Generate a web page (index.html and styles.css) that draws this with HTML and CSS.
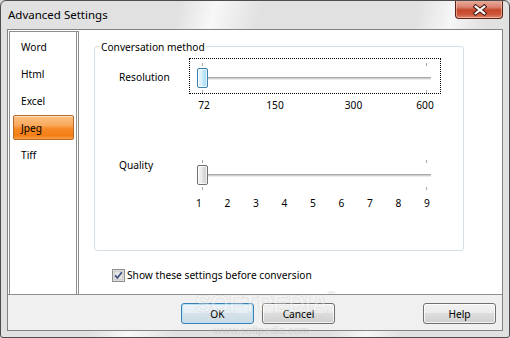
FILE: index.html
```html
<!DOCTYPE html>
<html>
<head>
<meta charset="utf-8">
<link rel="stylesheet" href="styles.css">
</head>
<body>
<div class="window">
  <div class="titlebar">
    <span class="title">Advanced Settings</span>
    <div class="close">
      <svg width="48" height="19" viewBox="0 0 48 19">
        <path d="M20.5 6.5 L29.5 13.5 M29.5 6.5 L20.5 13.5" stroke="#4a1e16" stroke-width="4.4" stroke-linecap="square" fill="none"/>
        <path d="M20.5 6.5 L29.5 13.5 M29.5 6.5 L20.5 13.5" stroke="#ffffff" stroke-width="2.2" stroke-linecap="square" fill="none"/>
      </svg>
    </div>
  </div>
  <div class="client">
    <div class="main">
      <ul class="list">
        <li class="item">Word</li>
        <li class="item">Html</li>
        <li class="item">Excel</li>
        <li class="item selected">Jpeg</li>
        <li class="item">Tiff</li>
      </ul>
      <div class="panel">
        <div class="group">
          <div class="legend">Conversation method</div>
          <div class="row row-res">
            <div class="label label-res">Resolution</div>
            <div class="slider focused">
              <span class="tick tick-top tick-l"></span>
              <span class="tick tick-top tick-r"></span>
              <span class="track"></span>
              <span class="thumb thumb-blue"></span>
              <span class="tick tick-bot tick-l"></span>
              <span class="tick tick-bot tick-r"></span>
            </div>
            <div class="scale scale-res"><span>72</span><span>150</span><span>300</span><span>600</span></div>
          </div>
          <div class="row row-qual">
            <div class="label label-qual">Quality</div>
            <div class="slider">
              <span class="tick tick-top tick-l"></span>
              <span class="tick tick-top tick-r"></span>
              <span class="track"></span>
              <span class="thumb thumb-gray"></span>
              <span class="tick tick-bot tick-l"></span>
              <span class="tick tick-bot tick-r"></span>
            </div>
            <div class="scale scale-qual"><span>1</span><span>2</span><span>3</span><span>4</span><span>5</span><span>6</span><span>7</span><span>8</span><span>9</span></div>
          </div>
        </div>
        <label class="check-row">
          <span class="checkbox">
            <svg width="13" height="13" viewBox="0 0 13 13">
              <rect x="0.5" y="0.5" width="12" height="12" fill="#f4f4f4" stroke="#8e8f8f"/>
              <rect x="2" y="2" width="9" height="9" fill="#e4e4e4" stroke="#b7b7b7" stroke-width="0.8"/>
              <path d="M3.2 6.4 L5.4 9 L9.8 3.2" stroke="#3d4f7e" stroke-width="1.7" fill="none"/>
            </svg>
          </span>
          <span>Show these settings before conversion</span>
        </label>
      </div>
    </div>
    <div class="footer">
      <button class="btn btn-default">OK</button>
      <button class="btn">Cancel</button>
      <button class="btn btn-help">Help</button>
    </div>
  </div>
  <div class="watermark">SOFTPEDIA<sup>™</sup></div>
  <div class="watermark-url">www.softpedia.com</div>
</div>
</body>
</html>
```
FILE: styles.css
```css
html, body {
  margin: 0;
  padding: 0;
  background: #d8d8d8;
}
body {
  font-family: "Noto Sans", "DejaVu Sans", sans-serif;
  font-size: 10.2px;
  color: #000;
}
.window {
  position: relative;
  width: 510px;
  height: 338px;
  box-sizing: border-box;
  border: 1px solid #4d4d4d;
  border-radius: 6px 6px 3px 3px;
  padding: 0 6px 6px 6px;
  display: flex;
  flex-direction: column;
  background:
    linear-gradient(105deg, rgba(255,255,255,0) 30%, rgba(255,255,255,0.75) 36%, rgba(255,255,255,0) 44%),
    linear-gradient(105deg, rgba(255,255,255,0) 70%, rgba(255,255,255,0.7) 76%, rgba(255,255,255,0) 82%),
    #e1e1e1;
  overflow: hidden;
}
.titlebar {
  height: 28px;
  display: flex;
  justify-content: space-between;
  align-items: flex-start;
  flex-shrink: 0;
}
.title {
  font-size: 11.5px;
  line-height: 16px;
  margin-top: 6px;
  padding-left: 1px;
  color: #000;
}
.close {
  width: 48px;
  height: 19px;
  margin-top: -1px;
  box-sizing: border-box;
  border: 1px solid #5e2218;
  border-top: none;
  border-radius: 0 0 4px 4px;
  background: linear-gradient(#eab1a3 0%, #d9826d 40%, #c7472c 55%, #cd5639 80%, #e08a6c 100%);
  box-shadow: inset 0 0 0 1px rgba(255,220,210,0.5);
  display: flex;
}
.close svg { display: block; }
.client {
  flex: 1;
  border: 1px solid #838383;
  background: #f0f0f0;
  display: flex;
  flex-direction: column;
}
.main {
  height: 265px;
  box-sizing: border-box;
  background: #fff;
  border-bottom: 1px solid #8e8f8f;
  display: flex;
}
.list {
  list-style: none;
  margin: 1px 0 0 1px;
  padding: 0;
  width: 70px;
  box-sizing: border-box;
  border-left: 1px solid #8e8f8f;
  border-top: 1px solid #8e8f8f;
  border-right: 3px double #8e8f8f;
}
.item {
  height: 25px;
  line-height: 25px;
  margin: 2px 2px 0 3px;
  padding-left: 7px;
  border: 1px solid transparent;
  box-sizing: border-box;
}
.item.selected {
  border-color: #b8692a;
  border-radius: 2px;
  background: linear-gradient(#fcc185 0%, #f9a95c 40%, #f68a27 55%, #f47e14 85%, #f9a24a 100%);
  box-shadow: inset 0 1px 0 rgba(255,235,200,0.8);
}
.panel {
  flex: 1;
  display: flex;
  flex-direction: column;
}
.group {
  margin: 16px 0 0 15px;
  width: 370px;
  height: 205px;
  box-sizing: border-box;
  border: 1px solid #d5dfe5;
  border-radius: 3px;
}
.legend {
  margin: -7px 0 0 5px;
  padding: 0 1px;
  width: fit-content;
  line-height: 14px;
  background: #fff;
}
.row {
  display: grid;
  grid-template-columns: 70px 252px;
  margin-left: 24px;
}
.row-res { margin-top: 4px; }
.row-qual { margin-top: 43px; }
.label {
  line-height: 14px;
  grid-row: 1;
  grid-column: 1;
  align-self: start;
}
.label-res { margin-top: 12px; }
.label-qual { margin-top: 3px; }
.slider {
  grid-row: 1;
  grid-column: 2;
  position: relative;
  height: 36px;
  box-sizing: border-box;
  border: 1px dotted transparent;
}
.slider.focused { border-color: #000; }
.tick {
  position: absolute;
  width: 1px;
  height: 3px;
  background: #a6a6a6;
}
.tick-top { top: 4px; }
.tick-bot { top: 31px; }
.tick-l { left: 12px; }
.tick-r { left: 236px; }
.track {
  position: absolute;
  left: 9px;
  top: 18px;
  width: 232px;
  height: 3px;
  background: linear-gradient(#a9a9a9 0 34%, #cfcfcf 34% 67%, #ececec 67%);
}
.thumb {
  position: absolute;
  left: 7px;
  top: 9px;
  width: 11px;
  height: 20px;
  box-sizing: border-box;
  border-radius: 2px;
}
.thumb-blue {
  border: 1px solid #3c7fb1;
  background: linear-gradient(to right, #eaf6fd 0%, #d9f0fc 45%, #bee6fd 55%, #a7d9f5 100%);
  box-shadow: inset 0 0 0 1px rgba(255,255,255,0.7);
}
.thumb-gray {
  border: 1px solid #707070;
  background: linear-gradient(to right, #f4f4f4 0%, #ebebeb 45%, #dddddd 55%, #d0d0d0 100%);
  box-shadow: inset 0 0 0 1px rgba(255,255,255,0.7);
}
.scale {
  grid-row: 2;
  grid-column: 2;
  line-height: 14px;
}
.scale-res {
  margin-top: 4px;
  padding-left: 3px;
  display: grid;
  grid-template-columns: 71px 78.5px 71.5px 24px;
}
.scale-res span {
  width: 24px;
  text-align: center;
}
.scale-qual {
  margin-top: 5px;
  width: 248px;
  display: flex;
  justify-content: space-between;
}
.scale-qual span {
  width: 20px;
  text-align: center;
}
.check-row {
  margin: 17px 0 0 33px;
  display: flex;
  align-items: center;
  gap: 2px;
  line-height: 14px;
}
.checkbox {
  width: 13px;
  height: 13px;
  display: block;
}
.checkbox svg { display: block; }
.footer {
  flex: 1;
  display: flex;
  align-items: flex-start;
  gap: 8px;
  padding: 8px 6px 0 173px;
}
.btn {
  width: 73px;
  height: 21px;
  box-sizing: border-box;
  font-family: "Noto Sans", "DejaVu Sans", sans-serif;
  font-size: 10.2px;
  color: #000;
  padding: 0;
  border: 1px solid #707070;
  border-radius: 3px;
  background: linear-gradient(#f2f2f2 0%, #ebebeb 50%, #dddddd 50%, #cfcfcf 100%);
  box-shadow: inset 0 0 0 1px rgba(255,255,255,0.75);
}
.btn-default {
  border-color: #3c7fb1;
  background: linear-gradient(#eef5f9 0%, #e3edf3 50%, #d5e2ea 50%, #cbdae4 100%);
  box-shadow: inset 0 0 0 1px #b6e1f7;
}
.btn-help { margin-left: auto; }
.watermark {
  position: absolute;
  left: 194px;
  top: 289px;
  font-family: "Liberation Sans", sans-serif;
  font-weight: bold;
  font-size: 24px;
  line-height: 28px;
  letter-spacing: -0.5px;
  color: rgba(255,255,255,0.3);
  -webkit-text-stroke: 1px rgba(170,170,170,0.2);
  pointer-events: none;
}
.watermark sup {
  font-size: 8px;
  vertical-align: top;
  line-height: 10px;
  letter-spacing: 0;
}
.watermark-url {
  position: absolute;
  left: 213px;
  top: 323px;
  font-family: "Liberation Sans", sans-serif;
  font-size: 11px;
  line-height: 12px;
  color: rgba(175,175,175,0.35);
  pointer-events: none;
}
```
